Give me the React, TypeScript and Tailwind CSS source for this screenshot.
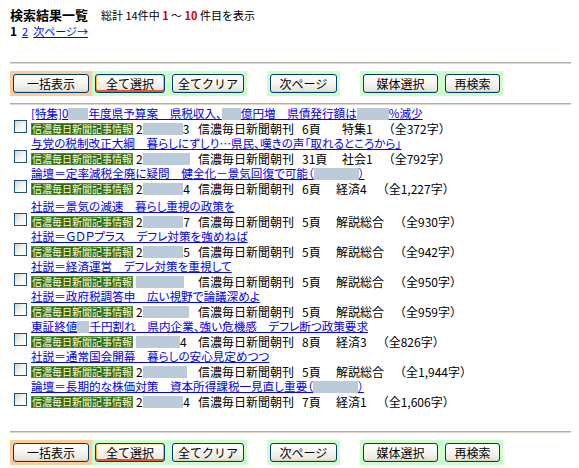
import React from 'react';

type Part = string | { blur: number };

type Row = {
  title: Part[];
  date: [string, number, string];
  page: string;
  section: string;
  chars: string;
  extra?: boolean;
  shift?: boolean;
};

const rows: Row[] = [
  {
    title: ['[特集]0', { blur: 20 }, '年度県予算案　県税収入、', { blur: 19 }, '億円増　県債発行額は', { blur: 32 }, '%減少'],
    date: ['2', 40, '3'],
    page: '6頁',
    section: '特集1',
    chars: '（全372字）',
    shift: true,
  },
  {
    title: ['与党の税制改正大綱　暮らしにずしり…県民、嘆きの声「取れるところから」'],
    date: ['2', 48, ''],
    page: '31頁',
    section: '社会1',
    chars: '（全792字）',
    shift: true,
  },
  {
    title: ['論壇＝定率減税全廃に疑問　健全化－景気回復で可能（', { blur: 45 }, '）'],
    date: ['2', 42, '4'],
    page: '6頁',
    section: '経済4',
    chars: '（全1,227字）',
    extra: true,
  },
  {
    title: ['社説＝景気の減速　暮らし重視の政策を'],
    date: ['2', 42, '7'],
    page: '5頁',
    section: '解説総合',
    chars: '（全930字）',
  },
  {
    title: ['社説＝ＧＤＰプラス　デフレ対策を強めねば'],
    date: ['2', 42, '5'],
    page: '5頁',
    section: '解説総合',
    chars: '（全942字）',
  },
  {
    title: ['社説＝経済運営　デフレ対策を重視して'],
    date: ['', 48, ''],
    page: '5頁',
    section: '解説総合',
    chars: '（全950字）',
  },
  {
    title: ['社説＝政府税調答申　広い視野で論議深めよ'],
    date: ['2', 46, ''],
    page: '5頁',
    section: '解説総合',
    chars: '（全959字）',
  },
  {
    title: ['東証終値', { blur: 12 }, '千円割れ　県内企業、強い危機感　デフレ断つ政策要求'],
    date: ['', 44, '4'],
    page: '8頁',
    section: '経済3',
    chars: '（全826字）',
  },
  {
    title: ['社説＝通常国会開幕　暮らしの安心見定めつつ'],
    date: ['2', 44, ''],
    page: '5頁',
    section: '解説総合',
    chars: '（全1,944字）',
  },
  {
    title: ['論壇＝長期的な株価対策　資本所得課税一見直し重要（', { blur: 45 }, '）'],
    date: ['2', 42, '4'],
    page: '7頁',
    section: '経済1',
    chars: '（全1,606字）',
  },
];

const Rule = () => <div className="h-[2px] w-[561px] bg-[#b3b0a3] border-b border-[#dcd9cc]" />;

const XpButton = ({ label, w, hot }: { label: string; w: number; hot?: boolean }) => (
  <button
    style={{ width: w }}
    className={
      'h-[19px] rounded-[3px] border border-[#003c74] bg-linear-to-b from-white via-[#f6f5f0] to-[#e3e1d6] text-[12px] leading-none text-black ' +
      (hot ? 'shadow-[inset_0_-2px_0_#e8553a,inset_1px_0_0_#f8b33c,inset_-1px_0_0_#f8b33c,inset_0_1px_0_#ffe6b0]' : 'shadow-[inset_0_-1px_0_#d6d0c0]')
    }
  >
    {label}
  </button>
);

const ButtonBar = () => (
  <div className="flex items-center h-[25px]">
    <div className="h-full bg-[#ffcc99] px-[3px] flex items-center">
      <XpButton label="一括表示" w={76} />
    </div>
    <div className="h-full bg-[#ccffcc] px-[3px] flex items-center gap-[7px]">
      <XpButton label="全て選択" w={70} hot />
      <XpButton label="全てクリア" w={72} />
    </div>
    <div className="h-full bg-[#ccffcc] px-[3px] flex items-center ml-[20px]">
      <XpButton label="次ページ" w={67} />
    </div>
    <div className="h-full bg-[#ccffcc] px-[3px] flex items-center gap-[7px] ml-[20px]">
      <XpButton label="媒体選択" w={75} />
      <XpButton label="再検索" w={55} />
    </div>
  </div>
);

const Blur = ({ w }: { w: number }) => (
  <span style={{ width: w }} className="inline-block h-[12px] bg-[#bccbd9] align-[-2px]" />
);

export default function App() {
  return (
    <div
      className="w-[579px] h-[468px] overflow-hidden bg-white pl-[10px] text-black"
      style={{ fontFamily: '"Noto Sans CJK JP", "Noto Sans", sans-serif' }}
    >
      <div className="pt-[6px] flex items-baseline">
        <span className="text-[13px] font-bold leading-[17px]">検索結果一覧</span>
        <span className="ml-[13px] text-[11px] leading-[17px]">
          総計 14件中 <b className="text-[#dd0000]">1</b> 〜 <b className="text-[#dd0000]">10</b> 件目を表示
        </span>
      </div>
      <div className="flex items-baseline text-[11px] leading-[14px]">
        <b className="text-[12px]">1</b>
        <a className="ml-[5px] text-[#0000ff] underline">2</a>
        <a className="ml-[5px] text-[#0000ff] underline">次ページ→</a>
      </div>

      <div className="mt-[24px]">
        <Rule />
      </div>
      <div className="mt-[7px]">
        <ButtonBar />
      </div>
      <div className="mt-[7px]">
        <Rule />
      </div>

      <div className="mt-[1px] flex flex-col">
        {rows.map((r, i) => (
          <div key={i} className={r.extra ? 'h-[33px]' : 'h-[30px]'}>
            <div className="h-[15px] pl-[21px] text-[11.6px] leading-[15px] whitespace-nowrap">
              <a className="text-[#0000ff] underline [font-feature-settings:'palt']">
                {r.title.map((p, j) =>
                  typeof p === 'string' ? <span key={j}>{p}</span> : <Blur key={j} w={p.blur} />
                )}
              </a>
            </div>
            <div className="h-[15px] flex items-center whitespace-nowrap text-[12px] leading-[15px]">
              <span className="ml-[4px] -mt-[5px] w-[13px] h-[13px] border border-[#1c5180] bg-linear-to-br from-[#d4d4cc] via-[#f4f4f0] to-white" />
              <span className="ml-[4px] w-[102px] h-[12px] bg-[#2c6a1e] border border-[#4d8a3c] text-[#ffffc8] text-[10px] leading-[10px] flex items-center justify-center">
                信濃毎日新聞記事情報
              </span>
              <span className="ml-[3px] w-[54px] flex items-center text-[12px]">
                <span>{r.date[0]}</span>
                <span style={{ width: r.date[1] }} className="inline-block h-[12px] bg-[#bccbd9]" />
                <span>{r.date[2]}</span>
              </span>
              <span className="ml-[8px]">信濃毎日新聞朝刊</span>
              <span className="ml-[8px] w-[34px]">{r.page}</span>
              <span className={r.shift ? 'ml-[6px]' : ''}>{r.section}</span>
              <span className="ml-[10px]">{r.chars}</span>
            </div>
          </div>
        ))}
      </div>

      <div className="mt-[22px]">
        <Rule />
      </div>
      <div className="mt-[7px]">
        <ButtonBar />
      </div>
    </div>
  );
}
